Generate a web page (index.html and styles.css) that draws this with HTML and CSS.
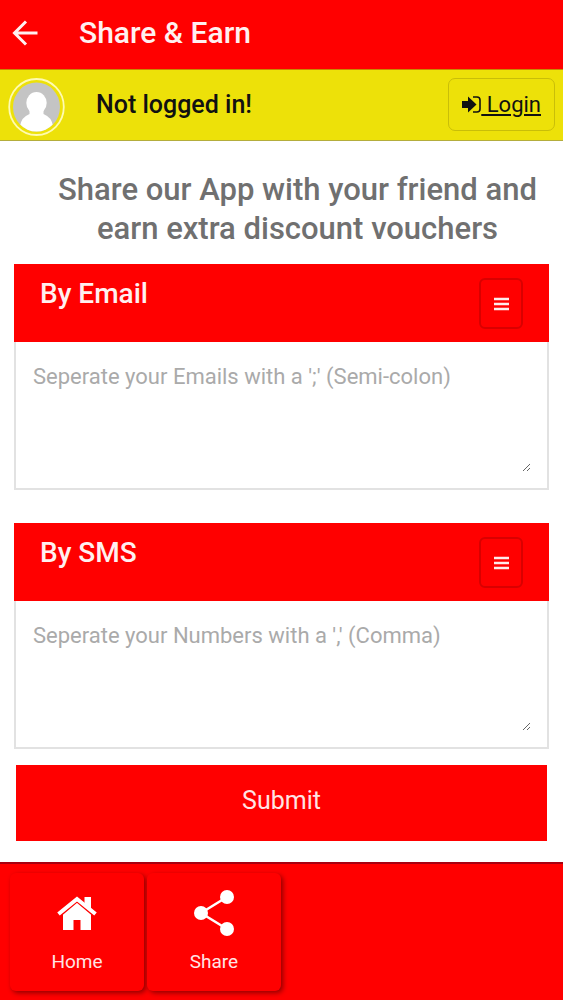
FILE: index.html
```html
<!DOCTYPE html>
<html lang="en">
<head>
<meta charset="utf-8">
<meta name="viewport" content="width=device-width, initial-scale=1">
<title>Share &amp; Earn</title>
<link rel="stylesheet" href="styles.css">
</head>
<body>
<header class="topbar">
  <button class="back" type="button" aria-label="Back">
    <svg width="26" height="26" viewBox="0 0 26 26" fill="none" stroke="#fff0f0" stroke-width="3"><path d="M25.500 13H3M14 1.500L2.500 13L14 24.500"/></svg>
  </button>
  <h1 class="title">Share &amp; Earn</h1>
</header>
<section class="account">
  <svg class="avatar" width="57" height="58" viewBox="0 0 57 58">
    <defs><clipPath id="face"><ellipse cx="28.500" cy="29" rx="23.500" ry="24.500"/></clipPath></defs>
    <ellipse cx="28.500" cy="29" rx="27.300" ry="28" fill="none" stroke="#fffbb0" stroke-width="1.800"/>
    <g clip-path="url(#face)">
      <rect width="57" height="58" fill="#c4c4c4"/>
      <ellipse cx="28.500" cy="25" rx="10.200" ry="11" fill="#fff"/>
      <path d="M21.500 32H35.500V36Q43.500 39 45 48V58H12V48Q13.500 39 21.500 36Z" fill="#fff"/>
    </g>
  </svg>
  <p class="status">Not logged in!</p>
  <a class="login" href="#"><svg class="login-icon" width="19" height="18" viewBox="0 0 19 18"><path d="M0 5H6V0.500L14.500 8.500L6 16.500V12H0Z" fill="#111"/><path d="M11 1H15Q18 1 18 4V13Q18 16 15 16H11" fill="none" stroke="#111" stroke-width="1.600"/></svg><span class="login-text">&nbsp;Login</span></a>
</section>
<main class="content">
  <h2 class="lead">Share our App with your friend and earn extra discount vouchers</h2>
  <form class="form">
    <section class="panel">
      <div class="panel-head">
        <label class="panel-title" for="emails">By Email</label>
        <button class="menu" type="button" aria-label="Email contacts"><svg width="15" height="14" viewBox="0 0 15 14" stroke="#ffeaea" stroke-width="2.500"><path d="M0 2H15M0 7H15M0 12H15"/></svg></button>
      </div>
      <div class="panel-body"><textarea class="entry" id="emails" placeholder="Seperate your Emails with a ';' (Semi-colon)"></textarea></div>
    </section>
    <section class="panel">
      <div class="panel-head">
        <label class="panel-title" for="numbers">By SMS</label>
        <button class="menu" type="button" aria-label="SMS contacts"><svg width="15" height="14" viewBox="0 0 15 14" stroke="#ffeaea" stroke-width="2.500"><path d="M0 2H15M0 7H15M0 12H15"/></svg></button>
      </div>
      <div class="panel-body"><textarea class="entry" id="numbers" placeholder="Seperate your Numbers with a ',' (Comma)"></textarea></div>
    </section>
    <button class="submit" type="submit">Submit</button>
  </form>
</main>
<nav class="tabs">
  <a class="tab" href="#">
    <svg width="40" height="46" viewBox="0 0 40 46"><path d="M6 23L20 11L34 23V40H23.500V30H16.500V40H6Z" fill="#fff"/><path d="M1 25L20 9L39 25" fill="none" stroke="#f00" stroke-width="6"/><path d="M27.500 7H34V20L27.500 14Z" fill="#fff"/><path d="M1.500 24L20 9L38.500 24" fill="none" stroke="#fff" stroke-width="4"/></svg>
    <span>Home</span>
  </a>
  <a class="tab" href="#">
    <svg width="40" height="46" viewBox="0 0 40 46"><path d="M33 7L7 23L33 39" fill="none" stroke="#fff" stroke-width="2.500"/><g fill="#fff"><circle cx="33" cy="7" r="7"/><circle cx="7" cy="23" r="7"/><circle cx="33" cy="39" r="7"/></g></svg>
    <span>Share</span>
  </a>
</nav>
</body>
</html>
```
FILE: styles.css
```css
* { box-sizing: border-box; }

body {
  margin: 0;
  min-height: 100vh;
  display: flex;
  flex-direction: column;
  background: #fff;
  font-family: Roboto, "Liberation Sans", sans-serif;
}

button, textarea { font-family: inherit; }

.topbar {
  display: flex;
  align-items: center;
  gap: 41px;
  padding: 13px 12px 16px;
  background: #f00;
}

.back {
  display: flex;
  padding: 0;
  border: 0;
  background: none;
}

.title {
  margin: 0;
  color: #fff0f0;
  font-size: 30px;
  line-height: 40px;
  font-weight: 500;
}

.account {
  display: flex;
  align-items: flex-start;
  padding: 8px 8px 4px;
  border-top: 1px solid #c98a00;
  border-bottom: 1px solid #b4ad3c;
  background: #ede109;
}

.avatar { flex: none; }

.status {
  flex: 1;
  margin: 0 0 0 31px;
  color: #111;
  font-size: 25px;
  line-height: 53px;
  font-weight: 500;
}

.login {
  display: flex;
  align-items: center;
  height: 53px;
  padding: 0 13px;
  border: 1px solid #c9be08;
  border-radius: 7px;
  color: #111;
  font-size: 22px;
  line-height: 28px;
  text-decoration: none;
}

.login-text { text-decoration: underline; }

.content {
  flex: 1;
  padding: 29px 14px 21px;
}

.lead {
  margin: 0 0 16px;
  padding-left: 32px;
  color: #707070;
  font-size: 31px;
  line-height: 39px;
  font-weight: 500;
  text-align: center;
}

.form { display: flex; flex-direction: column; }

.panel { margin-bottom: 33px; }
.panel:nth-of-type(2) { margin-bottom: 16px; }

.panel-head {
  display: flex;
  justify-content: space-between;
  align-items: flex-start;
  padding: 14px 26px 13px;
  background: #f00;
}

.panel-title {
  color: #fff0f0;
  font-size: 28px;
  line-height: 32px;
  font-weight: 500;
}

.menu {
  display: flex;
  align-items: center;
  justify-content: center;
  width: 44px;
  height: 51px;
  padding: 0;
  border: 2px solid #d90000;
  border-radius: 6px;
  background: #f00;
}

.panel-body {
  padding: 16px;
  border: 2px solid #e2e2e2;
  border-top: 0;
}

.entry {
  display: block;
  width: 100%;
  height: 114px;
  padding: 4px 1px;
  border: 0;
  outline: 0;
  background: none;
  color: #555;
  font-size: 22px;
  line-height: 30px;
  resize: vertical;
}

.entry::placeholder { color: #aaa; }

.submit {
  margin: 0 2px;
  padding: 20px 0 24px;
  border: 0;
  background: #f00;
  color: #ffe4e4;
  font-size: 25px;
  line-height: 32px;
}

.tabs {
  display: flex;
  gap: 3px;
  padding: 9px 10px;
  border-top: 2px solid #a80010;
  background: #f00;
}

.tab {
  display: flex;
  flex-direction: column;
  align-items: center;
  gap: 13px;
  width: 134px;
  padding: 17px 0 16px;
  border-radius: 6px;
  box-shadow: 2px 2px 5px 0 #900000;
  background: #f00;
  color: #ffe4e4;
  font-size: 19px;
  line-height: 26px;
  text-decoration: none;
}
```
